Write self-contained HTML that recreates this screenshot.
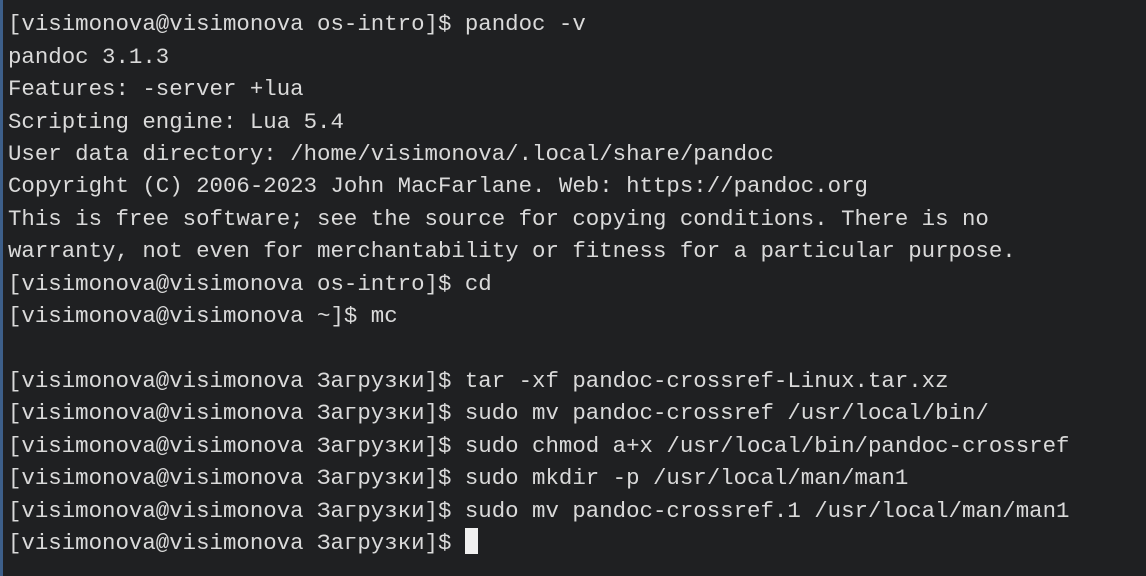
<!DOCTYPE html>
<html><head><meta charset="utf-8"><style>
html,body{margin:0;padding:0;}
body{width:1146px;height:576px;background:#1f2022;overflow:hidden;position:relative;}
.bar{position:absolute;left:0;top:0;width:3px;height:576px;background:#3d5f8a;}
pre{position:absolute;left:8px;top:-24px;margin:0;font-family:"Liberation Mono","DejaVu Sans Mono","Noto Sans CJK SC",monospace;font-size:22.4px;line-height:32.4px;color:#dadada;white-space:pre;}
.cur{display:inline-block;width:13px;height:26px;background:#f0f0f0;vertical-align:-5px;}
</style></head><body><div class="bar"></div><pre>

[visimonova@visimonova os-intro]$ pandoc -v
pandoc 3.1.3
Features: -server +lua
Scripting engine: Lua 5.4
User data directory: /home/visimonova/.local/share/pandoc
Copyright (C) 2006-2023 John MacFarlane. Web: https://pandoc.org
This is free software; see the source for copying conditions. There is no
warranty, not even for merchantability or fitness for a particular purpose.
[visimonova@visimonova os-intro]$ cd
[visimonova@visimonova ~]$ mc

[visimonova@visimonova Загрузки]$ tar -xf pandoc-crossref-Linux.tar.xz
[visimonova@visimonova Загрузки]$ sudo mv pandoc-crossref /usr/local/bin/
[visimonova@visimonova Загрузки]$ sudo chmod a+x /usr/local/bin/pandoc-crossref
[visimonova@visimonova Загрузки]$ sudo mkdir -p /usr/local/man/man1
[visimonova@visimonova Загрузки]$ sudo mv pandoc-crossref.1 /usr/local/man/man1
[visimonova@visimonova Загрузки]$ <span class="cur"></span></pre></body></html>
